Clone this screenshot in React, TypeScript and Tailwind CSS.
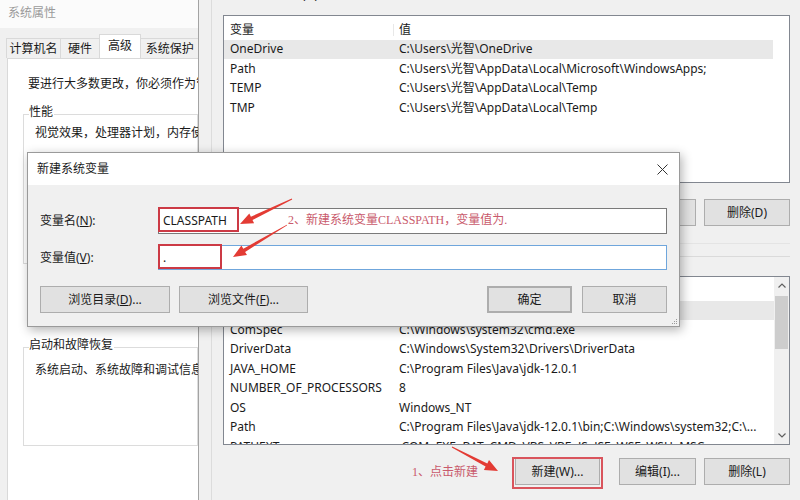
import React from "react";

type Row = [string, string];

const userVars: Row[] = [
  ["OneDrive", "C:\\Users\\光智\\OneDrive"],
  ["Path", "C:\\Users\\光智\\AppData\\Local\\Microsoft\\WindowsApps;"],
  ["TEMP", "C:\\Users\\光智\\AppData\\Local\\Temp"],
  ["TMP", "C:\\Users\\光智\\AppData\\Local\\Temp"],
];

const sysVars: Row[] = [
  ["asl.log", "Destination=file"],
  ["ComSpec", "C:\\Windows\\system32\\cmd.exe"],
  ["DriverData", "C:\\Windows\\System32\\Drivers\\DriverData"],
  ["JAVA_HOME", "C:\\Program Files\\Java\\jdk-12.0.1"],
  ["NUMBER_OF_PROCESSORS", "8"],
  ["OS", "Windows_NT"],
  ["Path", "C:\\Program Files\\Java\\jdk-12.0.1\\bin;C:\\Windows\\system32;C:\\..."],
  ["PATHEXT", ".COM;.EXE;.BAT;.CMD;.VBS;.VBE;.JS;.JSE;.WSF;.WSH;.MSC"],
  ["PROCESSOR_ARCHITECTURE", "AMD64"],
];

function Chevron({ up }: { up?: boolean }) {
  return (
    <svg width="8" height="5" viewBox="0 0 8 5" className="text-[#606060]">
      <polyline
        points={up ? "0.5,4.5 4,1 7.5,4.5" : "0.5,0.5 4,4 7.5,0.5"}
        fill="none"
        stroke="currentColor"
        strokeWidth="1.2"
      />
    </svg>
  );
}

function Scrollbar() {
  return (
    <div className="w-[15px] shrink-0 bg-[#f0f0f0] flex flex-col">
      <div className="h-[17px] flex items-center justify-center">
        <Chevron up />
      </div>
      <div className="mt-[2px] h-[53px] mx-[1px] bg-[#cdcdcd]" />
      <div className="flex-1" />
      <div className="h-[17px] flex items-center justify-center">
        <Chevron />
      </div>
    </div>
  );
}

function VarList({ rows, selected, scroll, top = 2.5 }: { rows: Row[]; selected: number; scroll?: boolean; top?: number }) {
  return (
    <div className="h-full border border-[#828790] bg-white overflow-hidden flex">
      <div
        className={`flex-1 min-w-0 flex flex-col ${scroll ? "" : "pr-[16px]"} ${top > 3 ? "pt-[4px]" : "pt-[2.5px]"}`}
      >
        <div className="flex h-[19.5px] items-center shrink-0 whitespace-nowrap">
          <div className="w-[170px] pl-[6px] border-r border-[#e8e8e8]">变量</div>
          <div className="pl-[5px]">值</div>
        </div>
        {rows.map(([k, v], i) => (
          <div
            key={k + i}
            className={`flex h-[19.5px] items-center shrink-0 whitespace-nowrap ${i === selected ? "bg-[#e8e8e8]" : ""}`}
          >
            <div className="w-[175px] shrink-0 pl-[6px]">{k}</div>
            <div>{v}</div>
          </div>
        ))}
      </div>
      {scroll && <Scrollbar />}
    </div>
  );
}

function Btn({ children, className = "" }: { children: React.ReactNode; className?: string }) {
  return (
    <div
      className={`h-[27px] flex items-center justify-center bg-[#e1e1e1] border border-[#adadad] whitespace-nowrap ${className}`}
    >
      {children}
    </div>
  );
}

function Arrow({ x1, y1, x2, y2 }: { x1: number; y1: number; x2: number; y2: number }) {
  const dx = x2 - x1;
  const dy = y2 - y1;
  const len = Math.hypot(dx, dy);
  const ux = dx / len;
  const uy = dy / len;
  const nx = -uy;
  const ny = ux;
  const head = 13;
  const hw = 5.5;
  const bx = x2 - ux * head;
  const by = y2 - uy * head;
  const p = (x: number, y: number) => `${x.toFixed(1)},${y.toFixed(1)}`;
  const pts = [
    p(x1 + nx * 0.4, y1 + ny * 0.4),
    p(bx + nx * 1.8, by + ny * 1.8),
    p(bx + nx * hw, by + ny * hw),
    p(x2, y2),
    p(bx - nx * hw, by - ny * hw),
    p(bx - nx * 1.8, by - ny * 1.8),
    p(x1 - nx * 0.4, y1 - ny * 0.4),
  ].join(" ");
  return <polygon points={pts} fill="#e33b34" />;
}

function LeftWindow() {
  return (
    <div className="w-[198px] h-full shrink-0 flex flex-col bg-[#f0f0f0] overflow-hidden whitespace-nowrap">
      <div className="h-[28px] shrink-0 bg-[#fbfbfb] pl-[8px] pt-[7px] text-[#9a9a9a]">系统属性</div>
      <div className="h-[6px] shrink-0" />
      <div className="h-[24px] shrink-0 flex items-end pl-[6px]">
        <div className="h-[20px] w-[58px] border border-b-0 border-[#d9d9d9] flex items-center justify-center">计算机名</div>
        <div className="h-[20px] w-[40px] border-t border-[#d9d9d9] flex items-center justify-center">硬件</div>
        <div className="h-[24px] w-[44px] bg-white border border-b-0 border-[#d9d9d9] flex items-center justify-center pb-[2px]">
          高级
        </div>
        <div className="h-[20px] w-[60px] border-t border-[#d9d9d9] flex items-center pl-[5px]">系统保护</div>
      </div>
      <div className="flex-1 ml-[7px] bg-white border-l border-t border-[#d9d9d9] flex flex-col">
        <div className="mt-[19px] pl-[20px]">要进行大多数更改，你必须作为管理员登录。</div>
        <div className="mt-[24px] ml-[15px] h-[150px] border border-[#dcdcdc] relative">
          <div className="absolute -top-[9px] left-[5px] bg-white pr-[1px]">性能</div>
          <div className="mt-[12px] pl-[11px]">视觉效果，处理器计划，内存使用，以及虚拟内存</div>
        </div>
        <div className="mt-[83px] ml-[15px] h-[99px] border border-[#dcdcdc] relative">
          <div className="absolute -top-[9px] left-[5px] bg-white pr-[1px]">启动和故障恢复</div>
          <div className="mt-[16px] pl-[11px]">系统启动、系统故障和调试信息</div>
        </div>
      </div>
    </div>
  );
}

function RightWindow() {
  return (
    <div className="flex-1 h-full bg-[#f0f0f0] border-l border-[#a3a3a3] flex">
      <div className="w-[12px] shrink-0" />
      <div className="flex-1 border-l border-[#dcdcdc] pl-[11px] pr-[10px] flex flex-col">
        <div className="h-[15px] shrink-0 overflow-hidden">
          <div className="-mt-[11px] -ml-[8px] whitespace-nowrap">光智 的用户变量(U)</div>
        </div>
        <div className="h-[168px] shrink-0">
          <VarList rows={userVars} selected={0} top={3.5} />
        </div>
        <div className="mt-[16px] flex justify-end gap-[8px]">
          <Btn className="w-[85px]">新建(N)...</Btn>
          <Btn className="w-[85px]">编辑(E)...</Btn>
          <Btn className="w-[86px]">删除(D)</Btn>
        </div>
        <div className="mt-[17px] border-t border-[#e4e4e4]" />
        <div className="mt-[12px] border-t border-[#dadada]" />
        <div className="mt-[19px] h-[169px] shrink-0">
          <VarList rows={sysVars} selected={0} scroll top={4} />
        </div>
        <div className="mt-[13px] flex justify-end">
          <Btn className="w-[85px]">新建(W)...</Btn>
          <Btn className="w-[77px] ml-[19px]">编辑(I)...</Btn>
          <Btn className="w-[86px] ml-[8px]">删除(L)</Btn>
        </div>
      </div>
    </div>
  );
}

function NewVarDialog() {
  return (
    <div className="absolute left-[27px] top-[152px] w-[653px] h-[175px] border border-[#9a9a9a] bg-[#f0f0f0] shadow-[2px_3px_10px_rgba(0,0,0,0.3)] flex flex-col">
      <div className="h-[32px] shrink-0 bg-white flex items-center justify-between pl-[9px] pr-[11px]">
        <span>新建系统变量</span>
        <svg width="11" height="11" viewBox="0 0 11 11">
          <path d="M0.5 0.5 L10.5 10.5 M10.5 0.5 L0.5 10.5" stroke="#333" strokeWidth="1" />
        </svg>
      </div>
      <div className="flex-1 px-[12px] flex flex-col relative">
        <div className="mt-[23px] h-[26px] flex items-center">
          <div className="w-[118px] shrink-0">
            变量名(<span className="underline">N</span>):
          </div>
          <div className="flex-1 h-full bg-white border border-[#7a7a7a] flex items-center pl-[4px]">CLASSPATH</div>
        </div>
        <div className="mt-[11px] h-[25px] flex items-center">
          <div className="w-[118px] shrink-0">
            变量值(<span className="underline">V</span>):
          </div>
          <div className="flex-1 h-full bg-white border border-[#6fa6dc] flex items-center pl-[4px]">.</div>
        </div>
        <div className="mt-[16px] flex">
          <Btn className="w-[130px]">
            浏览目录(<span className="underline">D</span>)...
          </Btn>
          <Btn className="w-[129px] ml-[9px]">
            浏览文件(<span className="underline">F</span>)...
          </Btn>
          <div className="flex-1" />
          <Btn className="w-[85px] border-2 border-[#3b84c8]">确定</Btn>
          <Btn className="w-[85px] ml-[10px]">取消</Btn>
        </div>
        <div className="absolute right-[2px] bottom-[2px] grid grid-cols-3 gap-[1px]">
          <div className="w-[1px] h-[1px]" />
          <div className="w-[1px] h-[1px]" />
          <div className="w-[1px] h-[1px] bg-[#9a9a9a]" />
          <div className="w-[1px] h-[1px]" />
          <div className="w-[1px] h-[1px] bg-[#9a9a9a]" />
          <div className="w-[1px] h-[1px] bg-[#9a9a9a]" />
          <div className="w-[1px] h-[1px] bg-[#9a9a9a]" />
          <div className="w-[1px] h-[1px] bg-[#9a9a9a]" />
          <div className="w-[1px] h-[1px] bg-[#9a9a9a]" />
        </div>
      </div>
    </div>
  );
}

export default function App() {
  return (
    <div className="relative w-[800px] h-[500px] overflow-hidden bg-white text-[12px] leading-none text-[#1a1a1a] font-['Noto_Sans','Noto_Sans_CJK_SC',sans-serif]">
      <div className="flex h-full">
        <LeftWindow />
        <RightWindow />
      </div>
      <NewVarDialog />

      {/* annotations */}
      <div className="absolute left-[158px] top-[207px] w-[81px] h-[25px] border-2 border-[#cc3a45]" />
      <div className="absolute left-[158px] top-[244px] w-[64px] h-[25px] border-2 border-[#cc3a45]" />
      <div className="absolute left-[512px] top-[457px] w-[91px] h-[32px] border-2 border-[#d9545c]" />
      <div className="absolute left-[288px] top-[214px] whitespace-nowrap text-[12px] text-[#c95a6c] font-['Liberation_Serif','Noto_Sans_CJK_SC',serif]">
        2、新建系统变量CLASSPATH，变量值为.
      </div>
      <div className="absolute left-[412px] top-[466px] whitespace-nowrap text-[12px] text-[#c95a6c] font-['Liberation_Serif','Noto_Sans_CJK_SC',serif]">
        1、点击新建
      </div>
      <svg className="absolute inset-0 pointer-events-none" width="800" height="500" viewBox="0 0 800 500">
        <Arrow x1={292} y1={199} x2={240} y2={224} />
        <Arrow x1={287} y1={225} x2={233} y2={257} />
        <Arrow x1={452} y1={447} x2={498} y2={471} />
      </svg>
    </div>
  );
}
